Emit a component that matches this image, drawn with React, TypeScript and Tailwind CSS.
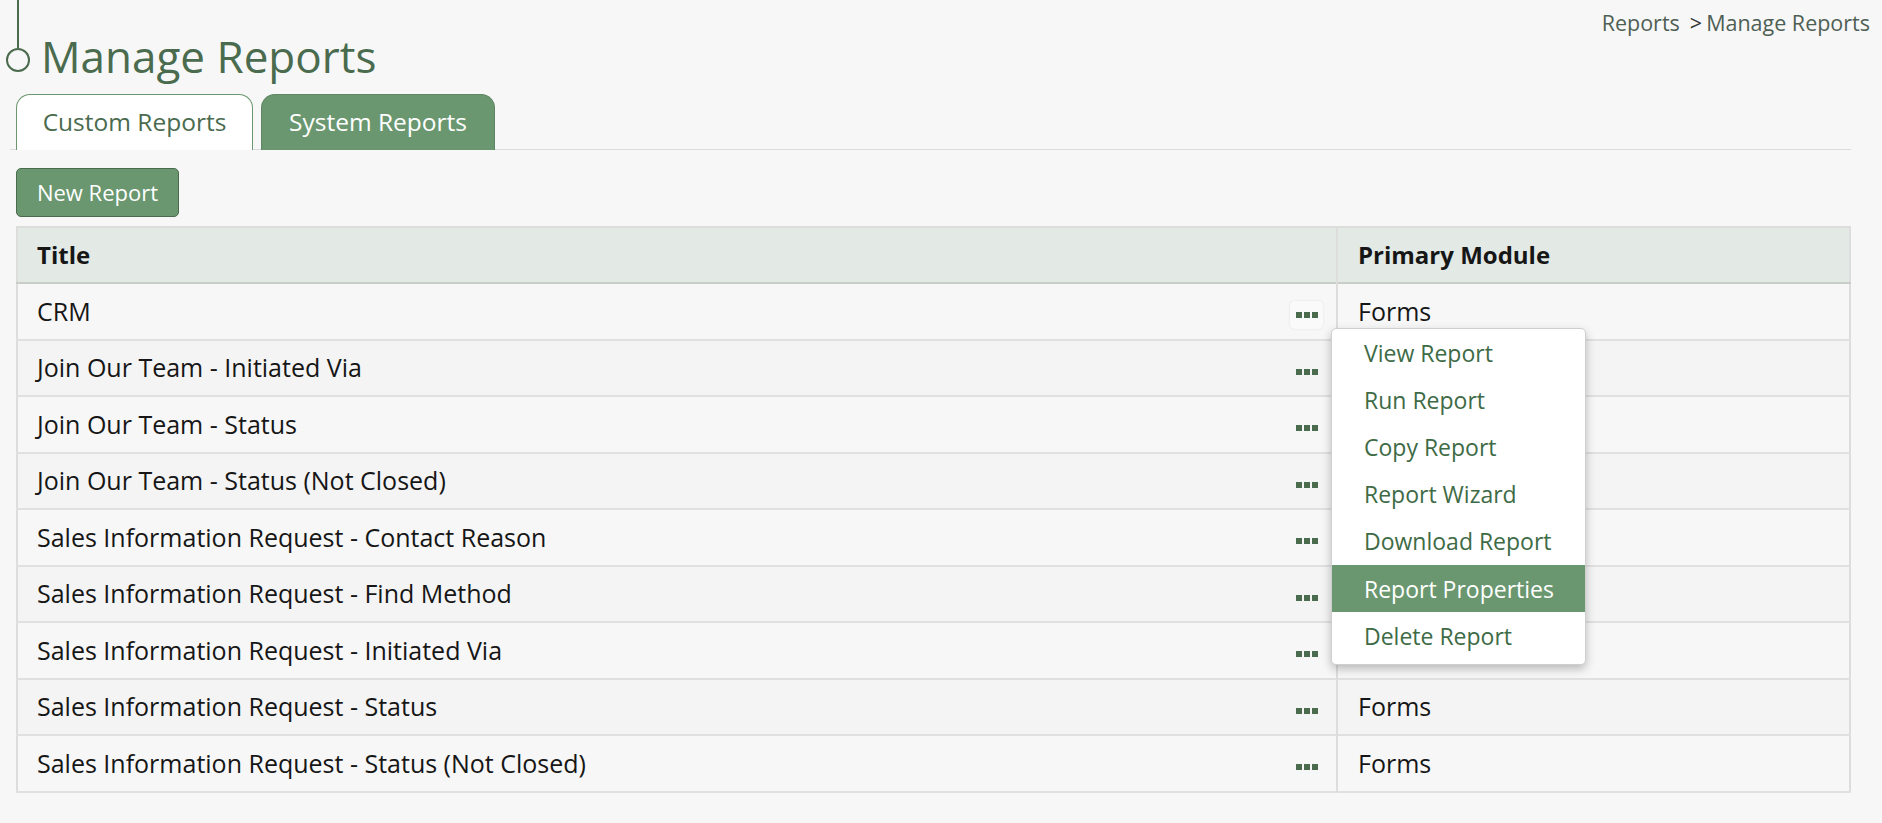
import { useState } from "react";

const rows = [
  { title: "CRM", module: "Forms" },
  { title: "Join Our Team - Initiated Via", module: "Forms" },
  { title: "Join Our Team - Status", module: "Forms" },
  { title: "Join Our Team - Status (Not Closed)", module: "Forms" },
  { title: "Sales Information Request - Contact Reason", module: "Forms" },
  { title: "Sales Information Request - Find Method", module: "Forms" },
  { title: "Sales Information Request - Initiated Via", module: "Forms" },
  { title: "Sales Information Request - Status", module: "Forms" },
  { title: "Sales Information Request - Status (Not Closed)", module: "Forms" },
];

const menuItems = [
  "View Report",
  "Run Report",
  "Copy Report",
  "Report Wizard",
  "Download Report",
  "Report Properties",
  "Delete Report",
];

function Dots() {
  return (
    <span className="flex gap-[2px]">
      <span className="w-[6px] h-[6px] bg-[#4a6b4e]" />
      <span className="w-[6px] h-[6px] bg-[#4a6b4e]" />
      <span className="w-[6px] h-[6px] bg-[#4a6b4e]" />
    </span>
  );
}

export default function App() {
  const [tab, setTab] = useState<"custom" | "system">("custom");
  const [openRow] = useState(0);
  const [hovered, setHovered] = useState("Report Properties");

  return (
    <div className="min-h-screen bg-[#f7f7f7] font-['Open_Sans',sans-serif] text-[#161616] pl-[16px] pr-[31px]">
      {/* header */}
      <div className="flex justify-between h-[94px]">
        <div className="flex items-start">
          <div className="flex flex-col items-center w-[26px] -ml-[11px]">
            <div className="w-[2px] h-[48px] bg-[#4a6b4e]" />
            <div className="w-[24px] h-[24px] rounded-full border-2 border-[#4a6b4e]" />
          </div>
          <h1 className="ml-[10px] mt-[30px] text-[44px] leading-[52px] text-[#4a6b4e]">
            Manage Reports
          </h1>
        </div>
        <div className="mt-[7px] -mr-[19px] text-[21.5px] text-[#4f5f55]">
          <span>Reports</span>
          <span className="ml-[10px] text-[#333]">&gt;</span>
          <span className="ml-[4px]">Manage Reports</span>
        </div>
      </div>

      {/* tabs */}
      <div className="-ml-[6px] pl-[6px] flex gap-[8px] border-b border-[#dcdcdc]">
        <button
          onClick={() => setTab("custom")}
          className={`w-[237px] h-[56px] -mb-px rounded-t-[14px] border border-b-0 text-[24.5px] ${
            tab === "custom"
              ? "bg-white border-[#6a976f] text-[#4a6b4e]"
              : "bg-[#6a976f] border-[#5d8762] text-white"
          }`}
        >
          Custom Reports
        </button>
        <button
          onClick={() => setTab("system")}
          className={`w-[234px] h-[56px] -mb-px rounded-t-[14px] border border-b-0 text-[24.5px] ${
            tab === "system"
              ? "bg-white border-[#6a976f] text-[#4a6b4e]"
              : "bg-[#6a976f] border-[#5d8762] text-white"
          }`}
        >
          System Reports
        </button>
      </div>

      <button className="mt-[18px] w-[163px] h-[49px] rounded-[5px] border border-[#4a6b4e] bg-[#6a976f] text-white text-[22px]">
        New Report
      </button>

      {/* table */}
      <table className="mt-[9px] w-full border-collapse border-2 border-[#dddddd] text-[25px]">
        <thead>
          <tr className="bg-[#e3e9e5] border-b-2 border-[#c9cdca]">
            <th className="w-[1320px] h-[56px] pl-[19px] text-left font-bold text-[24px]">Title</th>
            <th className="pl-[20px] text-left font-bold text-[24px] border-l-2 border-[#dddddd]">
              Primary Module
            </th>
          </tr>
        </thead>
        <tbody>
          {rows.map((r, i) => (
            <tr
              key={r.title}
              className={`h-[56.5px] border-b-2 border-[#e0e0e0] ${
                i % 2 === 0 ? "bg-[#f7f7f7]" : "bg-[#f4f4f4]"
              }`}
            >
              <td className="pl-[19px] pr-[13px] py-0">
                <div className="flex items-center justify-between">
                  <span>{r.title}</span>
                  <span className="relative">
                    <span
                      className={`flex items-center justify-center w-[33px] h-[28px] mt-[8px] rounded-[5px] ${
                        i === openRow ? "bg-[#fafafa] shadow-[0_0_3px_rgba(0,0,0,0.08)]" : ""
                      }`}
                    >
                      <Dots />
                    </span>
                    {i === openRow && (
                      <div className="absolute z-10 left-[41px] top-[35px] w-[255px] pb-[4px] bg-white rounded-[5px] border border-[#cfcfcf] shadow-[0_4px_10px_rgba(0,0,0,0.25)]">
                        {menuItems.map((m) => (
                          <div
                            key={m}
                            onMouseEnter={() => setHovered(m)}
                            className={`h-[47.2px] flex items-center pl-[32px] text-[23px] ${
                              hovered === m ? "bg-[#6a976f] text-white" : "text-[#3e6b46]"
                            }`}
                          >
                            {m}
                          </div>
                        ))}
                      </div>
                    )}
                  </span>
                </div>
              </td>
              <td className="pl-[20px] border-l-2 border-[#dddddd]">{r.module}</td>
            </tr>
          ))}
        </tbody>
      </table>
    </div>
  );
}
